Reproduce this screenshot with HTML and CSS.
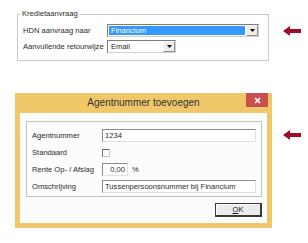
FILE: index.html
```html
<html>
    <head>
        <link rel="stylesheet" href="styles.css">
    </head>
    <body>
        <div class="top">
            <fieldset class="group">
                <legend>Kredietaanvraag</legend>
                <div class="row">
                    <span class="label">HDN aanvraag naar</span>
                    <div class="combo combo-wide">
                        <span class="combo-value selected">Financium</span>
                        <span class="combo-btn"><svg width="5" height="3" viewBox="0 0 5 3"><polygon points="0,0 5,0 2.5,3" fill="#000"/></svg></span>
                    </div>
                </div>
                <div class="row">
                    <span class="label">Aanvullende retourwijze</span>
                    <div class="combo combo-small">
                        <span class="combo-value">Email</span>
                        <span class="combo-btn"><svg width="5" height="3" viewBox="0 0 5 3"><polygon points="0,0 5,0 2.5,3" fill="#000"/></svg></span>
                    </div>
                </div>
            </fieldset>
            <svg class="arrow arrow-top" width="18" height="10" viewBox="0 0 18 10"><polygon points="0,5 7,0 7,3 18,3 18,7 7,7 7,10" fill="#9e0b25"/></svg>
        </div>

        <div class="bottom">
            <div class="dialog">
                <div class="titlebar">
                    <span></span>
                    <span class="title">Agentnummer toevoegen</span>
                    <span class="close"><svg width="7" height="7" viewBox="0 0 7 7"><path d="M1 1 L6 6 M6 1 L1 6" stroke="#fff" stroke-width="1.6"/></svg></span>
                </div>
                <div class="client">
                    <div class="box">
                        <div class="frow">
                            <span class="flabel">Agentnummer</span>
                            <span class="field field-wide">1234</span>
                        </div>
                        <div class="frow">
                            <span class="flabel">Standaard</span>
                            <span class="check"></span>
                        </div>
                        <div class="frow">
                            <span class="flabel">Rente Op- / Afslag</span>
                            <span class="field field-num">0,00</span>
                            <span class="unit">%</span>
                        </div>
                        <div class="frow">
                            <span class="flabel">Omschrijving</span>
                            <span class="field field-wide">Tussenpersoonsnummer bij Financium</span>
                        </div>
                    </div>
                    <div class="actions">
                        <button class="ok"><u>O</u>K</button>
                    </div>
                </div>
            </div>
            <svg class="arrow arrow-bottom" width="18" height="10" viewBox="0 0 18 10"><polygon points="0,5 7,0 7,3 18,3 18,7 7,7 7,10" fill="#9e0b25"/></svg>
        </div>
    </body>
</html>
```

FILE: styles.css
```css
*{
  margin:0px;
  box-sizing:border-box;
}

body{
  width:308px;
  height:243px;
  padding-top:9px;
  background:#fff;
  font-family:"Liberation Sans", Arial, sans-serif;
  font-size:7.6px;
  color:#2a2a2a;
  overflow:hidden;
}

/* top part: kredietaanvraag group */
.top{
  display:flex;
  align-items:flex-start;
}

.group{
  width:252px;
  margin:0px 0px 0px 17px;
  padding:5px 6px 7px 5px;
  border:1px solid #cacaca;
  min-inline-size:0;
}

.group legend{
  line-height:10px;
  padding:0px 1px;
  margin-left:-2px;
}

.row{
  display:flex;
  align-items:center;
  height:13px;
}
.row + .row{
  margin-top:3px;
}

.label{
  width:84px;
  white-space:nowrap;
}

.combo{
  display:flex;
  height:13px;
  background:#fff;
  border:1px solid;
  border-color:#7c7c7c #d0d0d0 #d0d0d0 #7c7c7c;
}
.combo-wide{
  width:152px;
}
.combo-small{
  width:69px;
}

.combo-value{
  flex:1;
  margin:1px 1px 1px 1px;
  padding-left:2px;
  line-height:9px;
  white-space:nowrap;
}
.combo-value.selected{
  background:#3399ff;
  color:#fff;
}

.combo-btn{
  width:12px;
  display:flex;
  align-items:center;
  justify-content:center;
  background:#eeeeee;
  border:1px solid;
  border-color:#f8f8f8 #8e8e8e #8e8e8e #f8f8f8;
}

.arrow{
  flex:none;
}
.arrow-top{
  margin:17px 0px 0px 14px;
}
.arrow-bottom{
  margin:37px 0px 0px 11px;
}

/* bottom part: dialog */
.bottom{
  display:flex;
  align-items:flex-start;
  margin-top:32px;
}

.dialog{
  width:257px;
  margin-left:15px;
  background:#f0c86a;
  padding:0px 5px 5px 5px;
}

.titlebar{
  display:grid;
  grid-template-columns:1fr auto 1fr;
  height:20px;
  margin:0px -5px;
}

.title{
  font-size:10px;
  line-height:20px;
  color:#333;
  white-space:nowrap;
}

.close{
  justify-self:end;
  width:22px;
  height:14px;
  margin-right:4px;
  background:#c9504e;
  display:flex;
  align-items:center;
  justify-content:center;
}

.client{
  background:#fcfcfc;
  padding:8px 5px 6px 6px;
}

.box{
  border:1px solid #c2c2c2;
  padding:7px 5px 3px 5px;
  display:flex;
  flex-direction:column;
  gap:4px;
}

.frow{
  display:flex;
  align-items:center;
  height:13px;
}

.flabel{
  width:70px;
  white-space:nowrap;
}

.field{
  height:13px;
  line-height:11px;
  padding:0px 2px;
  background:#fff;
  border:1px solid;
  border-color:#8a8a8a #e0e0e0 #e0e0e0 #8a8a8a;
  white-space:nowrap;
}
.field-wide{
  flex:1;
}
.field-num{
  width:26px;
  text-align:right;
}

.unit{
  margin-left:4px;
}

.check{
  width:8px;
  height:8px;
  background:#fff;
  border:1px solid;
  border-color:#6e6e6e #c8c8c8 #c8c8c8 #6e6e6e;
}

.actions{
  display:flex;
  justify-content:flex-end;
  margin-top:6px;
}

.ok{
  width:47px;
  height:14px;
  padding:0px;
  font-family:"Liberation Sans", Arial, sans-serif;
  font-size:7.6px;
  color:#222;
  background:#ececec;
  border:1px solid #3a3a3a;
  border-right-width:2px;
  border-bottom-width:2px;
  box-shadow:inset 1px 1px 0 #fff;
}
```
